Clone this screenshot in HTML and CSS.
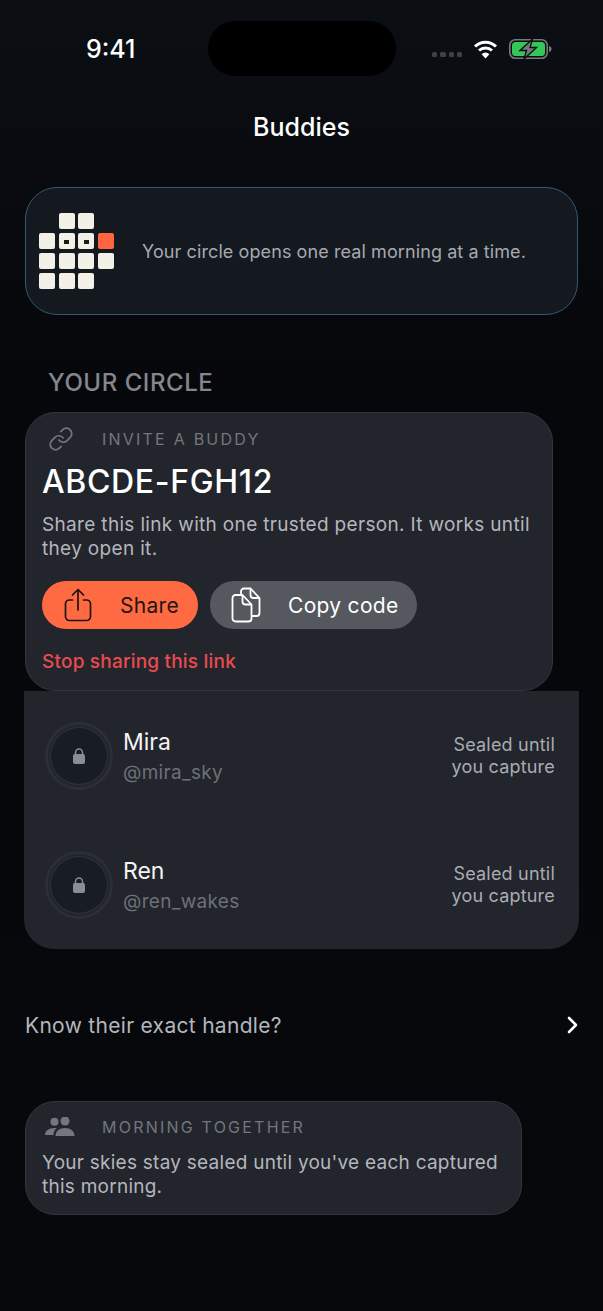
FILE: index.html
```html
<!DOCTYPE html>
<html lang="en">
<head>
  <meta charset="UTF-8" />
  <meta name="viewport" content="width=device-width, initial-scale=1.0" />
  <title>Buddies</title>
  <link rel="stylesheet" href="styles.css">
</head>
<body>
  <div class="status">
    <span class="time">9:41</span>
    <div class="island"></div>
    <div class="status-icons">
      <div class="dots"><i></i><i></i><i></i><i></i></div>
      <svg class="wifi" width="25" height="20" viewBox="0 0 25 20">
        <path d="M2 7.500a15 15 0 0 1 21 0M6 11.500a9.400 9.400 0 0 1 13 0" fill="none" stroke="#fff" stroke-width="3"/>
        <path d="M12.500 19.500 8.600 15.200a5.600 5.600 0 0 1 7.800 0z" fill="#fff"/>
      </svg>
      <svg class="battery" width="43" height="20" viewBox="0 0 43 20">
        <rect x="0.800" y="0.800" width="37.400" height="18.400" rx="5.500" fill="none" stroke="#77797d" stroke-width="1.600"/>
        <rect x="3" y="3" width="33" height="14" rx="3.500" fill="#34c759"/>
        <path d="M40 7c1.800.4 2.500 1.500 2.500 3s-.7 2.600-2.500 3z" fill="#77797d"/>
        <path d="M23.500 0 11 11.500h6.500L15 20l12.500-11.500H21z" fill="#77797d" stroke="#0b0e13" stroke-width="1.400"/>
      </svg>
    </div>
  </div>

  <h1 class="nav-title">Buddies</h1>

  <section class="hero">
    <div class="mascot">
      <i class="blank"></i><i></i><i></i><i class="blank"></i>
      <i></i><i class="eye"></i><i class="eye"></i><i class="accent"></i>
      <i></i><i></i><i></i><i></i>
      <i></i><i></i><i></i><i class="blank"></i>
    </div>
    <p>Your circle opens one real morning at a time.</p>
  </section>

  <h2 class="section-label">YOUR CIRCLE</h2>

  <section class="invite">
    <div class="card-head">
      <span class="head-icon">
        <svg width="26" height="26" viewBox="0 0 24 24" fill="none" stroke="#73767e" stroke-width="1.600" stroke-linecap="round">
          <path d="M10 13a5 5 0 0 0 7.540.54l3-3a5 5 0 0 0-7.070-7.070l-1.720 1.710"/>
          <path d="M14 11a5 5 0 0 0-7.540-.54l-3 3a5 5 0 0 0 7.070 7.070l1.710-1.710"/>
        </svg>
      </span>
      <span class="eyebrow">INVITE A BUDDY</span>
    </div>
    <div class="code">ABCDE-FGH12</div>
    <p class="copy">Share this link with one trusted person. It works until they open it.</p>
    <div class="actions">
      <button class="pill pill-share">
        <svg width="28" height="34" viewBox="0 0 28 34" fill="none" stroke="#1b1512" stroke-width="1.700" stroke-linecap="round" stroke-linejoin="round">
          <path d="M14 22V2M8.500 7 14 1.500 19.500 7"/>
          <path d="M8.500 12H5.500a4 4 0 0 0-4 4v12.500a4 4 0 0 0 4 4h17a4 4 0 0 0 4-4V16a4 4 0 0 0-4-4h-3"/>
        </svg>
        Share
      </button>
      <button class="pill pill-copy">
        <svg width="30" height="36" viewBox="0 0 30 36" fill="none" stroke="#fff" stroke-width="1.800" stroke-linejoin="round">
          <path d="M10 8V4.500a3 3 0 0 1 3-3h6.500L28.500 11v15a3 3 0 0 1-3 3H21"/>
          <path d="M19.500 1.500V8a3 3 0 0 0 3 3h6"/>
          <path d="M1.500 11a3 3 0 0 1 3-3h7L20.500 17.500V31.500a3 3 0 0 1-3 3h-13a3 3 0 0 1-3-3z"/>
          <path d="M11.500 8v6.500a3 3 0 0 0 3 3h6"/>
        </svg>
        Copy code
      </button>
    </div>
    <div class="stop">Stop sharing this link</div>
  </section>

  <section class="buddies">
    <div class="buddy">
      <div class="avatar">
        <svg width="12" height="16" viewBox="0 0 12 16">
          <path d="M2.500 7V4.500a3.500 3.500 0 0 1 7 0V7" fill="none" stroke="#8a8d95" stroke-width="1.500"/>
          <rect y="6" width="12" height="10" rx="2" fill="#8a8d95"/>
        </svg>
      </div>
      <div class="who">
        <div class="name">Mira</div>
        <div class="handle">@mira_sky</div>
      </div>
      <div class="state">Sealed until<br>you capture</div>
    </div>
    <div class="buddy">
      <div class="avatar">
        <svg width="12" height="16" viewBox="0 0 12 16">
          <path d="M2.500 7V4.500a3.500 3.500 0 0 1 7 0V7" fill="none" stroke="#8a8d95" stroke-width="1.500"/>
          <rect y="6" width="12" height="10" rx="2" fill="#8a8d95"/>
        </svg>
      </div>
      <div class="who">
        <div class="name">Ren</div>
        <div class="handle">@ren_wakes</div>
      </div>
      <div class="state">Sealed until<br>you capture</div>
    </div>
  </section>

  <div class="handle-row">
    <span>Know their exact handle?</span>
    <svg width="13" height="18" viewBox="0 0 13 18" fill="none" stroke="#fff" stroke-width="2.600" stroke-linecap="round" stroke-linejoin="round">
      <path d="M3 2l7 7-7 7"/>
    </svg>
  </div>

  <section class="together">
    <div class="card-head">
      <span class="head-icon">
        <svg width="30" height="20" viewBox="0 0 30 20" fill="#73767e">
          <circle cx="9.500" cy="4.700" r="4"/>
          <circle cx="20" cy="4" r="4.500"/>
          <path d="M0 18c0-4 3.500-7 9.500-7 .8 0 1.500.1 2.200.2C9.500 12.800 8.500 15 8.500 18z"/>
          <path d="M10.500 19c0-4.800 4-8 9.500-8s9.500 3.200 9.500 8z"/>
        </svg>
      </span>
      <span class="eyebrow">MORNING TOGETHER</span>
    </div>
    <p class="copy">Your skies stay sealed until you've each captured this morning.</p>
  </section>
</body>
</html>
```

FILE: styles.css
```css
* {
  box-sizing: border-box;
}
body {
  margin: 0;
  height: 1311px;
  overflow: hidden;
  font-family: Inter, "Noto Sans", sans-serif;
  background: linear-gradient(to bottom, #0b0e13, #06070b 30%, #07080c);
  color: white;
}
p {
  margin: 0;
}
.status {
  position: relative;
  height: 76px;
}
.time {
  position: absolute;
  left: 86px;
  top: 34px;
  font-size: 25px;
  line-height: 30px;
  font-weight: 500;
}
.island {
  position: absolute;
  left: 208px;
  top: 21px;
  width: 188px;
  height: 55px;
  border-radius: 28px;
  background: #000;
}
.status-icons {
  position: absolute;
  left: 432px;
  top: 39px;
  display: flex;
  align-items: flex-start;
}
.dots {
  display: flex;
  gap: 3px;
  margin-top: 13px;
  margin-right: 11px;
}
.dots i {
  width: 5.250px;
  height: 5px;
  border-radius: 1.500px;
  background: #3f4146;
}
.battery {
  margin-left: 11px;
}
.nav-title {
  margin: 36px 0 0;
  text-align: center;
  font-size: 25px;
  line-height: 30px;
  font-weight: 500;
}
.hero {
  display: flex;
  align-items: center;
  gap: 28px;
  width: 553px;
  height: 128px;
  margin: 45px 0 0 25px;
  padding-left: 13px;
  background: #141920;
  border: 1px solid #2f5a70;
  border-radius: 32px;
}
.hero p {
  font-size: 18px;
  color: #a6a9b0;
  letter-spacing: 0.090px;
}
.mascot {
  display: grid;
  grid-template-columns: repeat(4, 16px);
  grid-auto-rows: 16px;
  gap: 3.700px;
}
.mascot i {
  border-radius: 2px;
  background: #f3f0e8;
}
.mascot .blank {
  background: none;
}
.mascot .accent {
  background: #ff6640;
}
.mascot .eye {
  display: flex;
  align-items: center;
  justify-content: center;
}
.mascot .eye::after {
  content: "";
  width: 5px;
  height: 4px;
  margin-top: 1px;
  background: #1a1a18;
}
.section-label {
  margin: 53px 0 0 48px;
  font-size: 24px;
  line-height: 30px;
  font-weight: 500;
  letter-spacing: 0.550px;
  color: #85868c;
}
.invite {
  width: 528px;
  height: 279px;
  margin: 14px 0 0 25px;
  padding: 13px 17px 0 16px;
  background: #22252c;
  border: 1px solid #32353c;
  border-radius: 30px;
}
.card-head {
  display: flex;
  align-items: center;
  height: 26px;
}
.head-icon {
  display: flex;
  width: 54px;
  flex: none;
  margin-left: 6px;
}
.together .head-icon {
  margin-left: 3px;
  width: 57px;
}
.eyebrow {
  font-size: 16px;
  letter-spacing: 2.220px;
  color: #73767e;
}
.code {
  margin-top: 12px;
  font-size: 32px;
  line-height: 36px;
  font-weight: 500;
  letter-spacing: 0.650px;
}
.copy {
  font-size: 19px;
  line-height: 24px;
  color: #b4b6bc;
  letter-spacing: 0.250px;
}
.invite .copy {
  margin-top: 13px;
  letter-spacing: 0.330px;
}
.actions {
  display: flex;
  gap: 12px;
  margin-top: 20px;
}
.pill {
  display: flex;
  align-items: center;
  height: 48px;
  border: none;
  border-radius: 24px;
  font-family: inherit;
  font-size: 21px;
  letter-spacing: 0.300px;
}
.pill-share {
  width: 156px;
  padding-left: 22px;
  gap: 28px;
  background: #ff6a42;
  color: #211613;
}
.pill-copy {
  width: 207px;
  padding-left: 21px;
  gap: 27px;
  background: #55585e;
  color: #fff;
}
.stop {
  margin-top: 22px;
  font-size: 19px;
  line-height: 22px;
  font-weight: 500;
  letter-spacing: 0.200px;
  color: #ea4a4e;
}
.buddies {
  width: 555px;
  height: 258px;
  margin-left: 24px;
  background: #22252c;
  border-radius: 0 0 30px 30px;
}
.buddy {
  display: flex;
  align-items: center;
  height: 129px;
  padding: 0 24px 0 21px;
}
.avatar {
  display: flex;
  align-items: center;
  justify-content: center;
  flex: none;
  width: 68px;
  height: 68px;
  border-radius: 50%;
  background: #181c23;
  border: 3px solid #2b2e35;
  box-shadow: inset 0 0 0 2px #22252c, inset 0 0 0 3px #2f323a;
}
.who {
  flex: 1;
  margin-left: 10px;
}
.name {
  font-size: 23px;
  line-height: 30px;
  color: #f4f4f5;
}
.handle {
  margin-top: 4px;
  font-size: 19px;
  line-height: 24px;
  letter-spacing: 0.300px;
  color: #6d7078;
}
.state {
  text-align: right;
  font-size: 18px;
  line-height: 22px;
  color: #a9acb3;
  letter-spacing: 0.200px;
}
.handle-row {
  display: flex;
  align-items: center;
  justify-content: space-between;
  width: 554px;
  height: 30px;
  margin: 61px 0 0 25px;
  font-size: 21px;
  letter-spacing: 0.300px;
  color: #b4b6bc;
}
.together {
  width: 497px;
  height: 114px;
  margin: 61px 0 0 25px;
  padding: 12px 17px 0 16px;
  background: #22252c;
  border: 1px solid #32353c;
  border-radius: 30px;
}
.together .copy {
  margin-top: 11px;
}
```
